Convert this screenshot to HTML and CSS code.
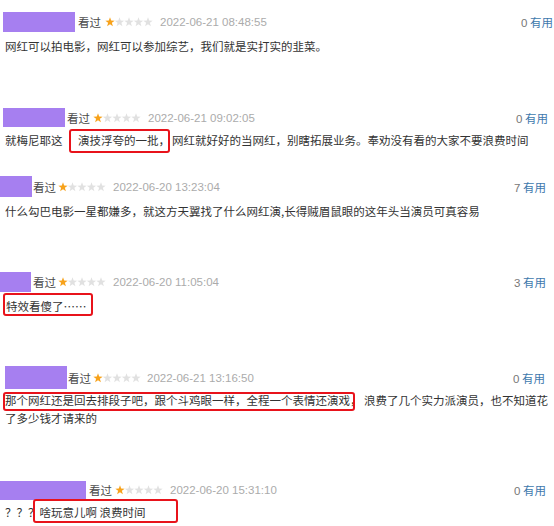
FILE: index.html
```html
<!DOCTYPE html>
<html lang="zh-CN">
<head>
    <meta charset="UTF-8" />
    <meta name="viewport" content="width=device-width, initial-scale=1" />
    <title>短评</title>
    <link rel="stylesheet" href="styles.css">
</head>
<body>
    <svg class="sprite" aria-hidden="true">
        <symbol id="star" viewBox="0 0 10 10">
            <polygon points="5,0.3 6.18,3.58 9.66,3.69 6.9,5.82 7.88,9.16 5,7.2 2.12,9.16 3.1,5.82 0.34,3.69 3.82,3.58" />
        </symbol>
    </svg>

    <div class="comment c1">
        <div class="comment-head">
            <span class="mask"></span>
            <span class="status">看过</span>
            <svg class="stars" viewBox="0 0 48 10">
                <use href="#star" class="on" x="0" width="10" height="10" />
                <use href="#star" x="9.5" width="10" height="10" />
                <use href="#star" x="19" width="10" height="10" />
                <use href="#star" x="28.5" width="10" height="10" />
                <use href="#star" x="38" width="10" height="10" />
            </svg>
            <span class="time">2022-06-21 08:48:55</span>
            <span class="votes"><span class="count">0</span> 有用</span>
        </div>
        <p class="comment-text">网红可以拍电影，网红可以参加综艺，我们就是实打实的韭菜。</p>
    </div>

    <div class="comment c2">
        <div class="comment-head">
            <span class="mask"></span>
            <span class="status">看过</span>
            <svg class="stars" viewBox="0 0 48 10">
                <use href="#star" class="on" x="0" width="10" height="10" />
                <use href="#star" x="9.5" width="10" height="10" />
                <use href="#star" x="19" width="10" height="10" />
                <use href="#star" x="28.5" width="10" height="10" />
                <use href="#star" x="38" width="10" height="10" />
            </svg>
            <span class="time">2022-06-21 09:02:05</span>
            <span class="votes"><span class="count">0</span> 有用</span>
        </div>
        <p class="comment-text">就梅尼耶这<span class="mark">演技浮夸的一批，</span>网红就好好的当网红，别瞎拓展业务。奉劝没有看的大家不要浪费时间</p>
    </div>

    <div class="comment c3">
        <div class="comment-head">
            <span class="mask"></span>
            <span class="status">看过</span>
            <svg class="stars" viewBox="0 0 48 10">
                <use href="#star" class="on" x="0" width="10" height="10" />
                <use href="#star" x="9.5" width="10" height="10" />
                <use href="#star" x="19" width="10" height="10" />
                <use href="#star" x="28.5" width="10" height="10" />
                <use href="#star" x="38" width="10" height="10" />
            </svg>
            <span class="time">2022-06-20 13:23:04</span>
            <span class="votes"><span class="count">7</span> 有用</span>
        </div>
        <p class="comment-text">什么勾巴电影一星都嫌多，就这方天翼找了什么网红演,长得贼眉鼠眼的这年头当演员可真容易</p>
    </div>

    <div class="comment c4">
        <div class="comment-head">
            <span class="mask"></span>
            <span class="status">看过</span>
            <svg class="stars" viewBox="0 0 48 10">
                <use href="#star" class="on" x="0" width="10" height="10" />
                <use href="#star" x="9.5" width="10" height="10" />
                <use href="#star" x="19" width="10" height="10" />
                <use href="#star" x="28.5" width="10" height="10" />
                <use href="#star" x="38" width="10" height="10" />
            </svg>
            <span class="time">2022-06-20 11:05:04</span>
            <span class="votes"><span class="count">3</span> 有用</span>
        </div>
        <p class="comment-text"><span class="mark">特效看傻了……</span></p>
    </div>

    <div class="comment c5">
        <div class="comment-head">
            <span class="mask"></span>
            <span class="status">看过</span>
            <svg class="stars" viewBox="0 0 48 10">
                <use href="#star" class="on" x="0" width="10" height="10" />
                <use href="#star" x="9.5" width="10" height="10" />
                <use href="#star" x="19" width="10" height="10" />
                <use href="#star" x="28.5" width="10" height="10" />
                <use href="#star" x="38" width="10" height="10" />
            </svg>
            <span class="time">2022-06-21 13:16:50</span>
            <span class="votes"><span class="count">0</span> 有用</span>
        </div>
        <p class="comment-text"><span class="mark">那个网红还是回去排段子吧，跟个斗鸡眼一样，全程一个表情还演戏</span>， 浪费了几个实力派演员，也不知道花<br>了多少钱才请来的</p>
    </div>

    <div class="comment c6">
        <div class="comment-head">
            <span class="mask"></span>
            <span class="status">看过</span>
            <svg class="stars" viewBox="0 0 48 10">
                <use href="#star" class="on" x="0" width="10" height="10" />
                <use href="#star" x="9.5" width="10" height="10" />
                <use href="#star" x="19" width="10" height="10" />
                <use href="#star" x="28.5" width="10" height="10" />
                <use href="#star" x="38" width="10" height="10" />
            </svg>
            <span class="time">2022-06-20 15:31:10</span>
            <span class="votes"><span class="count">0</span> 有用</span>
        </div>
        <p class="comment-text">？？？<span class="mark">啥玩意儿啊 浪费时间</span></p>
    </div>
</body>
</html>
```

FILE: styles.css
```css
:root {
    --text: #333;
    --muted: #ababab;
    --status: #4a4a4a;
    --link: #3d79ad;
    --mask: #a67ff0;
    --mark-red: #e8131b;
    --star-on: #f7a21b;
    --star-off: #e1e1e1;
    --cjk: "Noto Sans CJK SC", "Noto Sans", sans-serif;
    --latin: "Liberation Sans", Arial, sans-serif;
}

html, body {
    margin: 0;
    padding: 0;
    background: #fff;
}

body {
    width: 554px;
    height: 526px;
    overflow: hidden;
    font-family: var(--cjk);
    font-size: 11.5px;
    color: var(--text);
}

.sprite {
    display: block;
    width: 0;
    height: 0;
}

/* one comment = header row + text */
.comment {
    --mask-w: 60px;
    --mask-h: 20px;
    --mask-x: 3px;
    --gap-status: 3px;
    --gap-stars: 4px;
    --gap-time: 7px;
    --right: 8px;
    --text-gap: 4px;
}

.comment-head {
    display: flex;
    align-items: center;
    height: 22px;
    padding-right: var(--right);
    white-space: nowrap;
}

.mask {
    display: block;
    flex: none;
    width: var(--mask-w);
    height: var(--mask-h);
    margin-left: var(--mask-x);
    background: var(--mask);
}

.status {
    margin-left: var(--gap-status);
    color: var(--status);
}

.stars {
    flex: none;
    width: 48px;
    height: 10px;
    margin-left: var(--gap-stars);
    fill: var(--star-off);
}

.stars .on {
    fill: var(--star-on);
}

.time {
    margin-left: var(--gap-time);
    font-family: var(--latin);
    color: var(--muted);
}

.votes {
    margin-left: auto;
    color: var(--link);
}

.count {
    font-family: var(--latin);
    color: #777;
}

.comment-text {
    margin: var(--text-gap) 0 0;
    padding-left: 5px;
    line-height: 18px;
    white-space: nowrap;
}

/* red highlight boxes drawn over the text */
.mark {
    position: relative;
}

.mark::after {
    content: "";
    position: absolute;
    top: var(--mt);
    bottom: var(--mb);
    left: var(--ml);
    right: var(--mr);
    border: 2px solid var(--mark-red);
    border-radius: 3px;
}

.c1 {
    margin-top: 11px;
    --mask-w: 72px;
    --mask-h: 20px;
    --gap-status: 3px;
    --gap-stars: 4px;
    --right: 1px;
    --text-gap: 4px;
}

.c2 {
    margin-top: 51.5px;
    --mask-w: 62px;
    --mask-h: 19px;
    --gap-status: 2px;
    --gap-stars: 3px;
    --right: 6px;
    --text-gap: 2.5px;
}

.c2 .mark {
    margin-left: 15.5px;
    margin-right: 2px;
    --mt: -3px;
    --mb: -5.3px;
    --ml: -9px;
    --mr: 0px;
}

.c3 {
    margin-top: 26.5px;
    --mask-w: 32px;
    --mask-h: 21px;
    --mask-x: 0px;
    --gap-status: 1px;
    --gap-stars: 2px;
    --text-gap: 4.5px;
}

.c4 {
    margin-top: 51px;
    --mask-w: 31px;
    --mask-h: 20px;
    --mask-x: 0px;
    --gap-status: 2px;
    --gap-stars: 2px;
    --text-gap: 4px;
}

.c4 .comment-text {
    padding-left: 6px;
}

.c4 .mark {
    --mt: -5px;
    --mb: -2px;
    --ml: -3px;
    --mr: -6.5px;
}

.c5 {
    margin-top: 51.5px;
    --mask-w: 62px;
    --mask-h: 23px;
    --mask-x: 5px;
    --gap-status: 1px;
    --gap-stars: 2px;
    --gap-time: 6px;
    --right: 9px;
    --text-gap: 2.5px;
}

.c5 .mark {
    --mt: 0px;
    --mb: -3px;
    --ml: -2px;
    --mr: -5px;
}

.c6 {
    margin-top: 52px;
    --mask-w: 86px;
    --mask-h: 19px;
    --mask-x: 0px;
    --gap-status: 3px;
    --gap-stars: 3px;
    --text-gap: 1.5px;
}

.c6 .mark {
    --mt: -5px;
    --mb: -3.3px;
    --ml: -7px;
    --mr: -32.6px;
}
```
